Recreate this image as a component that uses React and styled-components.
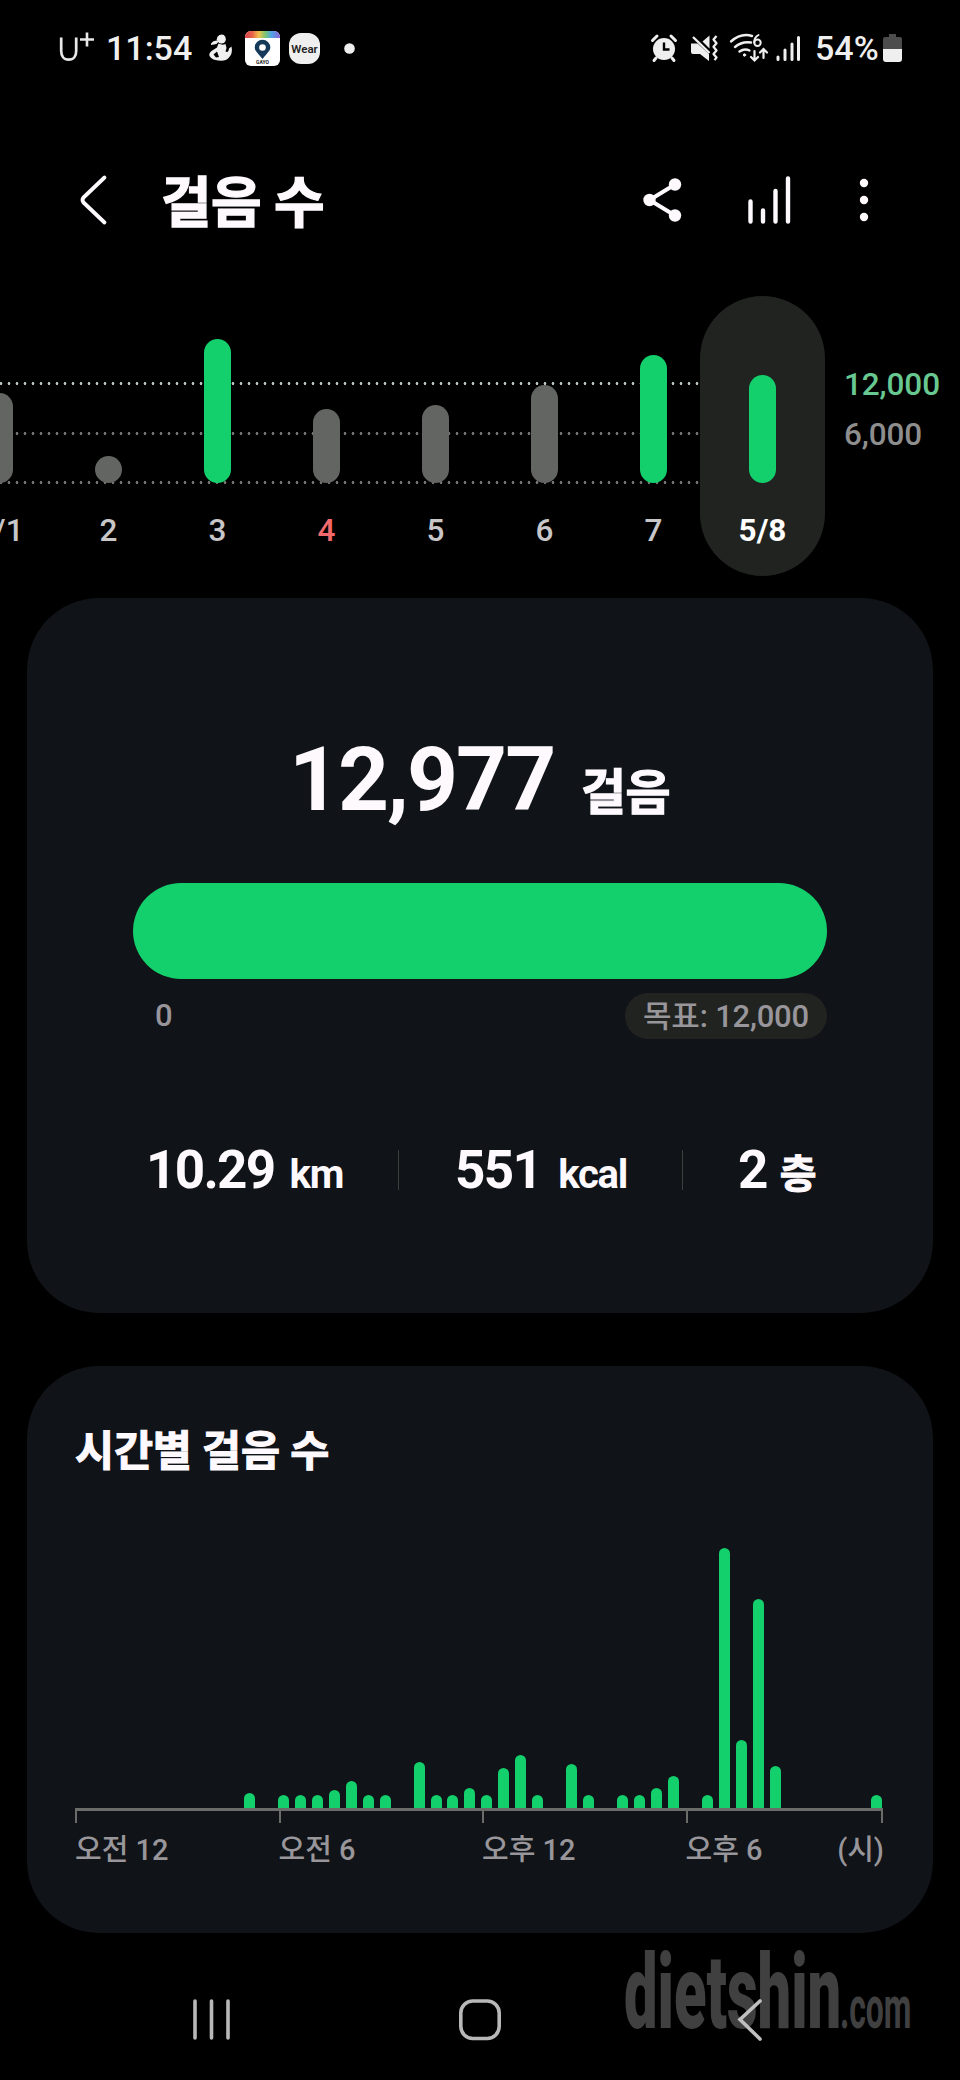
import React from "react";
import styled, { createGlobalStyle } from "styled-components";

const GREEN = "#13d06c";

const GlobalStyle = createGlobalStyle`
  * { box-sizing: border-box; }
  body {
    margin: 0;
    background: #000;
    color: #fdf9fd;
    font-family: Roboto, "Noto Sans CJK KR", sans-serif;
  }
  svg { display: block; flex: none; overflow: visible; }
`;

const Screen = styled.div`
  width: 960px;
  height: 2080px;
  background: #000;
  display: flex;
  flex-direction: column;
  overflow: hidden;
`;

const StatusBar = styled.header`
  height: 96px;
  padding: 0 58px 0 58px;
  display: flex;
  justify-content: space-between;
  align-items: center;
`;

const StatusGroup = styled.div`
  display: flex;
  align-items: center;
`;

const StatusText = styled.span`
  font-size: 34px;
  line-height: 40px;
  font-weight: 500;
  color: #efefef;
  width: ${(p) => p.$w}px;
  margin-left: ${(p) => p.$gap || 0}px;
  white-space: nowrap;
`;

const Toolbar = styled.nav`
  height: 200px;
  padding: 8px 91px 0 80px;
  display: flex;
  align-items: center;
`;

const Title = styled.h1`
  margin: 0 auto 0 55px;
  padding-top: 6px;
  font-size: 55px;
  line-height: 70px;
  font-weight: 700;
  letter-spacing: -0.6px;
  -webkit-text-stroke: 1.4px currentColor;
`;

const ToolIcons = styled.div`
  display: flex;
  align-items: center;
`;

const Week = styled.section`
  height: 302px;
  display: flex;
`;

const Days = styled.div`
  height: 280px;
  width: 825px;
  display: flex;
  justify-content: flex-end;
  background:
    radial-gradient(circle at 3px 1.5px, #b4c4ba 1.1px, transparent 1.7px) 6px 85.5px / 8px 3px repeat-x,
    radial-gradient(circle at 3px 1.5px, #747474 1.1px, transparent 1.7px) 6px 135.5px / 8px 3px repeat-x,
    radial-gradient(circle at 3px 1.5px, #747474 1.1px, transparent 1.7px) 6px 185px / 8px 3px repeat-x;
`;

const Day = styled.div`
  flex: none;
  width: ${(p) => (p.$selected ? 125 : 109)}px;
  margin-left: ${(p) => (p.$selected ? -8 : 0)}px;
  height: 280px;
  border-radius: 63px;
  background: ${(p) => (p.$selected ? "#212321" : "transparent")};
  display: flex;
  flex-direction: column;
  align-items: center;
`;

const DayPlot = styled.div`
  height: 186.5px;
  display: flex;
  align-items: flex-end;
`;

const DayBar = styled.div`
  width: 27px;
  height: ${(p) => p.$h}px;
  border-radius: 14px;
  background: ${(p) => (p.$met ? GREEN : "#636562")};
`;

const DayLabel = styled.span`
  margin-top: 29px;
  font-size: 31.5px;
  line-height: 38px;
  font-weight: ${(p) => (p.$selected ? 700 : 500)};
  color: ${(p) => (p.$selected ? "#fff" : p.$holiday ? "#f2696b" : "#c8c6c8")};
`;

const Scale = styled.div`
  padding: 64px 0 0 19px;
  display: flex;
  flex-direction: column;
`;

const ScaleLabel = styled.span`
  font-size: 31.5px;
  line-height: 50px;
  font-weight: 500;
  letter-spacing: -0.1px;
  color: ${(p) => (p.$goal ? "#68c891" : "#8e8e8e")};
`;

const Card = styled.section`
  margin: 0 27px ${(p) => p.$gap}px;
  height: ${(p) => p.$h}px;
  flex: none;
  border-radius: 72px;
  background: #101318;
  display: flex;
  flex-direction: column;
`;

const StepCount = styled.div`
  height: 285px;
  padding: 132px 0 0 262px;
  display: flex;
  align-items: baseline;
  line-height: 100px;
  font-weight: 700;
`;

const StepNumber = styled.span`
  font-size: 89px;
  letter-spacing: -2px;
  width: 292px;
`;

const StepUnit = styled.span`
  font-size: 49px;
  letter-spacing: -0.5px;
  -webkit-text-stroke: 1.2px currentColor;
`;

const GoalBar = styled.div`
  height: 96px;
  margin: 0 106px;
  border-radius: 48px;
  background: ${GREEN};
`;

const GoalRow = styled.div`
  margin: 14px 106px 0 128px;
  height: 46px;
  display: flex;
  justify-content: space-between;
  align-items: center;
  font-size: 31px;
  line-height: 46px;
  font-weight: 500;
  color: #98969a;
`;

const GoalPill = styled.span`
  width: 202px;
  height: 46px;
  padding-top: 1px;
  text-align: center;
  border-radius: 23px;
  background: #212321;
  letter-spacing: -0.2px;
`;

const Stats = styled.div`
  margin-top: 101px;
  padding-left: 119px;
  height: 60px;
  display: flex;
  align-items: center;
`;

const Stat = styled.div`
  width: ${(p) => p.$w}px;
  padding-top: 4px;
  display: flex;
  align-items: baseline;
  font-weight: 700;
  font-size: 53px;
  line-height: 60px;
  letter-spacing: -1.7px;
  white-space: nowrap;
`;

const StatUnit = styled.span`
  margin-left: ${(p) => p.$gap}px;
  font-size: 40px;
  letter-spacing: -1.2px;
  -webkit-text-stroke: ${(p) => (p.$hangul ? "1px currentColor" : "0")};
`;

const Divider = styled.i`
  width: 1px;
  height: 40px;
  margin-right: ${(p) => p.$gap}px;
  background: #3c3e3c;
`;

const CardTitle = styled.h2`
  margin: 56px 0 0 48px;
  height: 58px;
  font-size: 42.5px;
  line-height: 60px;
  font-weight: 700;
  letter-spacing: -0.2px;
  -webkit-text-stroke: 1.1px currentColor;
`;

const HourPlot = styled.div`
  margin: 0 50px 0 47.5px;
  height: 328px;
  display: flex;
  justify-content: space-between;
  align-items: flex-end;
`;

const HourBar = styled.div`
  width: 11px;
  height: ${(p) => p.$h}px;
  border-radius: 5.5px 5.5px 0 0;
  background: ${GREEN};
`;

const Axis = styled.div`
  margin: 0 50px 0 48px;
  height: 15px;
  border-top: 3px solid #6a6c6a;
  border-right: 2px solid #6a6c6a;
  display: flex;
  overflow: hidden;
`;

const Tick = styled.i`
  flex: none;
  width: 203.5px;
  border-left: 2px solid #6a6c6a;
`;

const HourLabels = styled.div`
  margin: 4px 49px 0 48px;
  display: flex;
  justify-content: space-between;
  font-size: 29px;
  line-height: 46px;
  font-weight: 500;
  color: #98969a;
`;

const HourLabelSlots = styled.div`
  width: 760px;
  display: flex;
`;

const HourLabel = styled.span`
  flex: none;
  width: ${(p) => (p.$last ? 100 : 203.5)}px;
  white-space: nowrap;
`;

const HourUnit = styled.span`
  white-space: nowrap;
`;

const NavBar = styled.footer`
  position: relative;
  flex: 1;
  display: flex;
  align-items: flex-start;
  padding: 64px 0 0 192px;
`;

const Watermark = styled.svg`
  position: absolute;
  left: 620px;
  top: 10px;
`;

const NavIcon = styled.svg`
  position: relative;
  margin-right: ${(p) => p.$gap || 0}px;
`;

const days = [
  { label: "5/1", h: 90 },
  { label: "2", h: 27 },
  { label: "3", h: 144, met: true },
  { label: "4", h: 74, holiday: true },
  { label: "5", h: 78 },
  { label: "6", h: 98 },
  { label: "7", h: 128, met: true },
  { label: "5/8", h: 108, met: true, selected: true },
];

const halfHours = [
  0, 0, 0, 0, 0, 0, 0, 0, 0, 0, 15.5, 0, 13.5, 13.5, 13.5, 18.5, 27, 13.5, 13.5, 0,
  46, 13.5, 13.5, 20, 13.5, 40.5, 53, 13.5, 0, 44.5, 13.5, 0, 13.5, 13.5, 20, 32,
  0, 13.5, 260.5, 68.5, 209.5, 42.5, 0, 0, 0, 0, 0, 13.5,
];

const StatusLeft = () => (
  <StatusGroup>
    <svg width="36" height="40" viewBox="0 0 36 40" fill="none" stroke="#e8e8e8">
      <path d="M3.200 9.500v13.500c0 5 2.500 8.700 7.500 8.700s7.500-3.700 7.500-8.700V9.500" strokeWidth="2.700" />
      <path d="M29 4.500v14M22 11.500h14" strokeWidth="2.600" />
    </svg>
    <StatusText $w={88} $gap={12}>11:54</StatusText>
    <svg width="24" height="28" viewBox="0 0 24 28" style={{ marginLeft: 15 }} fill="#f0f0f0">
      <circle cx="12.500" cy="5.200" r="4.300" />
      <path d="M8.500 3Q11-.5 15 1l1.500 3-5 3-4-1zM2 9.500Q5 5.500 10 7l-2.500 3-5.500 1z" />
      <path d="M9.500 9.500q4 2 7 .5l1 4-1 3.500q3 1.500 3.500-3l2.500-2q1.500 7-2.500 11-3 3.500-8.500 3.200Q3 26.500.5 22q-.8-2.800 2-5l5.500-3.500z" />
      <path d="M4.500 20.500l3.500-3 2 5.500-3 .5z" fill="#000" />
    </svg>
    <svg width="35" height="35" viewBox="0 0 35 35" style={{ marginLeft: 12 }}>
      <defs>
        <linearGradient id="rainbow">
          <stop offset="0" stopColor="#d8434b" />
          <stop offset=".2" stopColor="#e8604a" />
          <stop offset=".4" stopColor="#f2c24c" />
          <stop offset=".58" stopColor="#7cc473" />
          <stop offset=".76" stopColor="#4fa4e8" />
          <stop offset="1" stopColor="#8d62d6" />
        </linearGradient>
        <clipPath id="tile"><rect width="35" height="35" rx="6" /></clipPath>
      </defs>
      <g clipPath="url(#tile)">
        <rect width="35" height="35" fill="#fff" />
        <rect width="35" height="7" fill="url(#rainbow)" />
      </g>
      <path d="M17.500 28C13 22 9.700 20 9.700 16.500a7.800 7.800 0 0 1 15.600 0C25.300 20 22 22 17.500 28z" fill="#153a59" />
      <circle cx="17.500" cy="16.500" r="3.300" fill="#fff" />
      <text x="17.500" y="32.500" textAnchor="middle" fontSize="5" fontWeight="700" fill="#222" fontFamily="Roboto">GAYO</text>
    </svg>
    <svg width="31" height="31" viewBox="0 0 31 31" style={{ marginLeft: 9 }}>
      <rect width="31" height="31" rx="12" fill="#efefef" />
      <text x="15.500" y="19.800" textAnchor="middle" fontSize="11.500" fontWeight="600" fill="#222" fontFamily="Roboto" textLength="26.500" lengthAdjust="spacingAndGlyphs">Wear</text>
    </svg>
    <svg width="11" height="11" viewBox="0 0 11 11" style={{ marginLeft: 24 }}>
      <circle cx="5.500" cy="5.500" r="5.300" fill="#efefef" />
    </svg>
  </StatusGroup>
);

const StatusRight = () => (
  <StatusGroup>
    <svg width="26" height="28" viewBox="0 0 26 28">
      <circle cx="13" cy="15" r="11" fill="#efefef" />
      <path d="M1.500 6.500L6 2M24.500 6.500L20 2M5 24l-2 2.500M21 24l2 2.500" stroke="#efefef" strokeWidth="3" strokeLinecap="round" />
      <path d="M13 8.500V15.500h5.500" stroke="#000" strokeWidth="2.400" fill="none" />
    </svg>
    <svg width="28" height="28" viewBox="0 0 28 28" style={{ marginLeft: 14 }}>
      <path d="M0 9.500h6.500L18 20v7L9 20H2q-2 0-2-2z" fill="#efefef" />
      <path d="M18.500 1.500v13L11.500 7.500z" fill="#efefef" />
      <path d="M2 3L18.500 19" stroke="#efefef" strokeWidth="2.400" />
      <path d="M25.500 2l-3 3.600 3 3.600-3 3.600 3 3.600-3 3.600 3 3.600-2 2.500" fill="none" stroke="#efefef" strokeWidth="2.300" strokeLinejoin="round" />
    </svg>
    <svg width="40" height="30" viewBox="0 0 40 30" style={{ marginLeft: 10 }} fill="none" stroke="#efefef" strokeWidth="2.400" strokeLinecap="round">
      <path d="M2 8.500Q12-.5 23 3M6 14q7-6 16-4.500M10.500 18.500q5-3.500 10-1" />
      <circle cx="15.500" cy="22" r="1.200" fill="#efefef" strokeWidth="1" />
      <circle cx="28.500" cy="9.800" r="3.200" strokeWidth="2" />
      <path d="M29.500 2q-4.500 2.500-4.300 7.500" strokeWidth="2" />
      <path d="M25.500 18v9M22 24l3.500 3.500 3.500-3.500M34.500 25V17M31 19.500l3.500-3.500 3.500 3.500" strokeWidth="2.200" />
    </svg>
    <svg width="25" height="27" viewBox="0 0 25 27" style={{ marginLeft: 7 }} stroke="#efefef" strokeWidth="3" strokeLinecap="round">
      <path d="M2 22v2.500M9 15v9.500M16 9v15.500M22.500 2.500v22" />
    </svg>
    <StatusText $w={64} $gap={14}>54%</StatusText>
    <svg width="19" height="28" viewBox="0 0 19 28" style={{ marginLeft: 4 }}>
      <path d="M6 0h7v3h4q2 0 2 2v10H0V5q0-2 2-2h4z" fill="#4c4c4c" />
      <path d="M0 15h19v10q0 3-3 3H3q-3 0-3-3z" fill="#efefef" />
    </svg>
  </StatusGroup>
);

export default function App() {
  return (
    <>
      <GlobalStyle />
      <Screen>
        <StatusBar>
          <StatusLeft />
          <StatusRight />
        </StatusBar>
        <Toolbar>
          <svg width="26" height="50" viewBox="0 0 26 50" fill="none" stroke="#fdf9fd" strokeWidth="3.800" strokeLinecap="round" strokeLinejoin="round">
            <path d="M24.500 2.500L3.500 22.500q-2 2.500 0 5L24.500 47.500" />
          </svg>
          <Title>걸음 수</Title>
          <ToolIcons>
            <svg width="40" height="48" viewBox="0 0 40 48" fill="#fdf9fd">
              <path d="M32 8.500L6.500 24 32 39.500" fill="none" stroke="#fdf9fd" strokeWidth="4" />
              <circle cx="32" cy="8.500" r="6.200" />
              <circle cx="6.500" cy="24" r="6.200" />
              <circle cx="32" cy="39.500" r="6.200" />
            </svg>
            <svg width="44" height="50" viewBox="0 0 44 50" style={{ marginLeft: 65 }} stroke="#fdf9fd" strokeWidth="4.400" strokeLinecap="round">
              <path d="M2.500 26.500v20M15 35.500v11M27.500 16v30.500M40 3.500v43" />
            </svg>
            <svg width="10" height="44" viewBox="0 0 10 44" style={{ marginLeft: 67 }} fill="#fdf9fd">
              <circle cx="5" cy="5" r="4.200" />
              <circle cx="5" cy="22" r="4.200" />
              <circle cx="5" cy="39" r="4.200" />
            </svg>
          </ToolIcons>
        </Toolbar>
        <Week>
          <Days>
            {days.map((d) => (
              <Day key={d.label} $selected={d.selected}>
                <DayPlot>
                  <DayBar $h={d.h} $met={d.met} />
                </DayPlot>
                <DayLabel $selected={d.selected} $holiday={d.holiday}>{d.label}</DayLabel>
              </Day>
            ))}
          </Days>
          <Scale>
            <ScaleLabel $goal>12,000</ScaleLabel>
            <ScaleLabel>6,000</ScaleLabel>
          </Scale>
        </Week>
        <Card $h={714.5} $gap={53.5}>
          <StepCount>
            <StepNumber>12,977</StepNumber>
            <StepUnit>걸음</StepUnit>
          </StepCount>
          <GoalBar />
          <GoalRow>
            <span>0</span>
            <GoalPill>목표: 12,000</GoalPill>
          </GoalRow>
          <Stats>
            <Stat $w={252}>10.29<StatUnit $gap={15}>km</StatUnit></Stat>
            <Divider $gap={56} />
            <Stat $w={227}>551<StatUnit $gap={17}>kcal</StatUnit></Stat>
            <Divider $gap={55} />
            <Stat $w={90}>2<StatUnit $gap={13} $hangul>층</StatUnit></Stat>
          </Stats>
        </Card>
        <Card $h={567} $gap={0}>
          <CardTitle>시간별 걸음 수</CardTitle>
          <HourPlot>
            {halfHours.map((h, i) => (
              <HourBar key={i} $h={h} />
            ))}
          </HourPlot>
          <Axis>
            <Tick />
            <Tick />
            <Tick />
            <Tick />
          </Axis>
          <HourLabels>
            <HourLabelSlots>
              <HourLabel>오전 12</HourLabel>
              <HourLabel>오전 6</HourLabel>
              <HourLabel>오후 12</HourLabel>
              <HourLabel $last>오후 6</HourLabel>
            </HourLabelSlots>
            <HourUnit>(시)</HourUnit>
          </HourLabels>
        </Card>
        <NavBar>
          <Watermark width="300" height="100" viewBox="0 0 300 100" fill="#404040" fontFamily="Roboto, sans-serif" fontWeight="900">
            <text transform="translate(4 85) scale(.55 1)" fontSize="104" textLength="395" lengthAdjust="spacingAndGlyphs">dietshin</text>
            <text transform="translate(220 85) scale(.55 1)" fontSize="59" fontWeight="700" textLength="130" lengthAdjust="spacingAndGlyphs">.com</text>
          </Watermark>
          <NavIcon $gap={227} width="40" height="44" viewBox="0 0 40 44" stroke="#b8b8b8" strokeWidth="3.600" strokeLinecap="round">
            <path d="M3 4v37M19.500 4v37M36 4v37" />
          </NavIcon>
          <NavIcon $gap={236} width="42" height="44" viewBox="0 0 42 44" fill="none" stroke="#b8b8b8" strokeWidth="3.600">
            <rect x="1.800" y="4" width="38.400" height="37.500" rx="12" />
          </NavIcon>
          <NavIcon width="26" height="46" viewBox="0 0 26 46" fill="none" stroke="#c0c0c0" strokeWidth="3.600" strokeLinecap="round">
            <path d="M23 4L3 22.500 23 42" />
          </NavIcon>
        </NavBar>
      </Screen>
    </>
  );
}
